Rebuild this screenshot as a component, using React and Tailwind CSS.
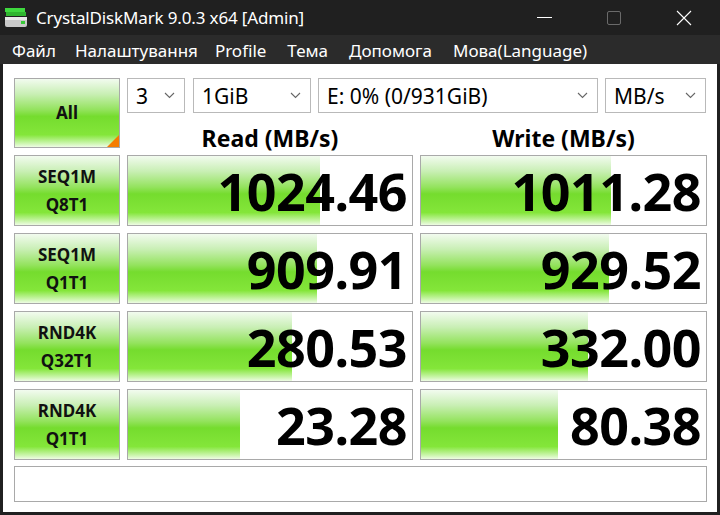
import React from "react";

const green =
  "bg-[linear-gradient(to_bottom,#f2fbef_0%,#c9efb5_22%,#94e35e_45%,#75dc2e_55%,#84e63a_82%,#c8f5a8_94%,#eefce4_100%)]";

function Dropdown({ value, w }) {
  return (
    <div
      className={`${w} h-[35px] border border-[#b9b9b9] bg-white flex items-center justify-between pl-[8px] pr-[8px] text-[21px] text-black`}
    >
      <span className="leading-none pt-[1px]">{value}</span>
      <svg width="11" height="7" viewBox="0 0 11 7" className="mr-[1px]">
        <path d="M1 1 L5.5 5.5 L10 1" stroke="#666" strokeWidth="1.1" fill="none" />
      </svg>
    </div>
  );
}

function Cell({ value, pct }) {
  return (
    <div className="relative h-[71px] border border-[#a9a9a9] bg-white overflow-hidden">
      <div className={`absolute left-0 top-0 bottom-0 ${green}`} style={{ width: pct + "%" }} />
      <div className="relative h-full flex items-center justify-end pr-[5px] text-[52px] font-bold leading-none tracking-[-0.5px] text-black">
        {value}
      </div>
    </div>
  );
}

function Label({ a, b }) {
  return (
    <div
      className={`h-[71px] border border-[#a9a9a9] ${green} flex flex-col items-center justify-center text-[17px] font-bold leading-[28px] text-[#111]`}
    >
      <span>{a}</span>
      <span>{b}</span>
    </div>
  );
}

export default function App() {
  const rows = [
    ["SEQ1M", "Q8T1", "1024.46", 67.5, "1011.28", 66.5],
    ["SEQ1M", "Q1T1", "909.91", 66.5, "929.52", 66],
    ["RND4K", "Q32T1", "280.53", 57.8, "332.00", 58.5],
    ["RND4K", "Q1T1", "23.28", 39.5, "80.38", 48],
  ];
  return (
    <div
      className="w-[720px] h-[515px] bg-[#202020] flex flex-col overflow-hidden"
      style={{ fontFamily: '"Noto Sans", "Open Sans", sans-serif' }}
    >
      {/* title bar */}
      <div className="h-[35px] flex items-center text-white shrink-0">
        <svg width="24" height="22" viewBox="0 0 24 22" className="ml-[4px] mr-[8px]">
          <rect x="1" y="1" width="20" height="4" fill="#3ed83e" />
          <rect x="2" y="5" width="20" height="4" fill="#2fb52f" />
          <rect x="1" y="10" width="22" height="10" rx="2" fill="#c9c9c9" />
          <rect x="1" y="10" width="22" height="3" fill="#e8e8e8" />
          <rect x="17" y="14" width="4" height="3" fill="#37c837" />
        </svg>
        <span className="text-[17px] tracking-[-0.15px]">CrystalDiskMark 9.0.3 x64 [Admin]</span>
        <div className="ml-auto flex items-center h-full">
          <div className="w-[46px] flex justify-center">
            <div className="w-[15px] h-[1px] bg-white" />
          </div>
          <div className="w-[46px] ml-[24px] flex justify-center">
            <div className="w-[14px] h-[14px] border border-[#6a6a6a] rounded-[2px]" />
          </div>
          <div className="w-[46px] ml-[24px] mr-[13px] flex justify-center">
            <svg width="16" height="16" viewBox="0 0 16 16">
              <path d="M1 1 L15 15 M15 1 L1 15" stroke="white" strokeWidth="1.1" />
            </svg>
          </div>
        </div>
      </div>
      {/* menu */}
      <div className="h-[29px] bg-[#2b2b2b] flex items-center text-[17px] text-white shrink-0 pl-[12px] pt-[2px]">
        <span>Файл</span>
        <span className="ml-[19px]">Налаштування</span>
        <span className="ml-[17px]">Profile</span>
        <span className="ml-[21px]">Тема</span>
        <span className="ml-[21px]">Допомога</span>
        <span className="ml-[21px]">Мова(Language)</span>
      </div>
      {/* content */}
      <div className="flex-1 bg-white ml-[3px] mr-[3px] mb-[3px] pl-[11px] pt-[14px]">
        <div className="grid grid-cols-[106px_286px_287px] gap-x-[7px] gap-y-[7px]">
          <div className="row-span-2 relative h-[70px]">
            <div
              className={`h-full border border-[#a9a9a9] ${green} flex items-center justify-center text-[17px] font-bold text-[#111]`}
            >
              All
            </div>
            <div className="absolute right-[1px] bottom-[1px] w-0 h-0 border-l-[12px] border-l-transparent border-b-[12px] border-b-[#f47c00]" />
          </div>
          <div className="col-span-2 h-[35px] flex -mb-[7px]">
            <Dropdown value="3" w="w-[58px]" />
            <div className="w-[8px]" />
            <Dropdown value="1GiB" w="w-[118px]" />
            <div className="w-[7px]" />
            <Dropdown value="E: 0% (0/931GiB)" w="w-[280px]" />
            <div className="w-[7px]" />
            <Dropdown value="MB/s" w="w-[101px]" />
          </div>
          <div className="h-[35px] -mt-[7px] flex items-center justify-center text-[23px] font-bold text-black pt-[22px]">
            Read (MB/s)
          </div>
          <div className="h-[35px] -mt-[7px] flex items-center justify-center text-[23px] font-bold text-black pt-[22px]">
            Write (MB/s)
          </div>
          {rows.map((r, i) => (
            <React.Fragment key={i}>
              <Label a={r[0]} b={r[1]} />
              <Cell value={r[2]} pct={r[3]} />
              <Cell value={r[4]} pct={r[5]} />
            </React.Fragment>
          ))}
          <div className="col-span-3 h-[36px] border border-[#a9a9a9] bg-white -mt-[1px]" />
        </div>
      </div>
    </div>
  );
}
